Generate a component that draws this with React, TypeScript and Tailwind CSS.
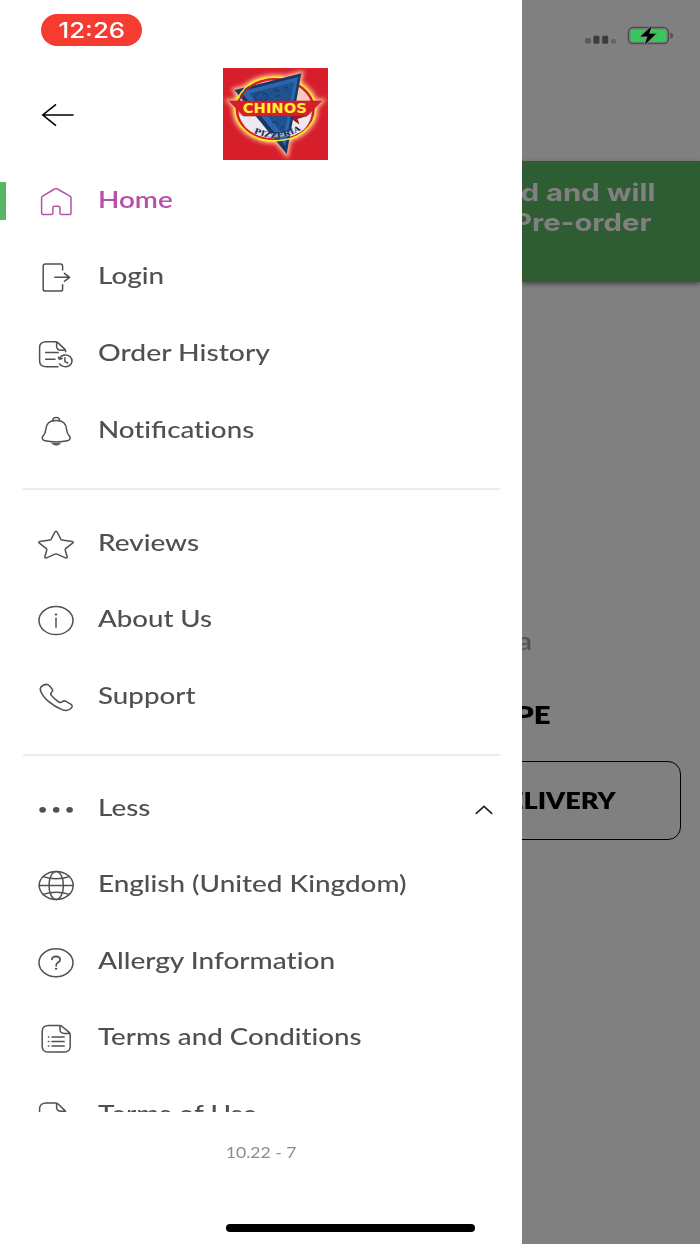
import type { ReactNode } from "react";

function Icon({ children }: { children: ReactNode }) {
  return (
    <svg
      width="36"
      height="36"
      viewBox="0 0 36 36"
      fill="none"
      stroke="currentColor"
      strokeWidth="1.5"
      strokeLinecap="round"
      strokeLinejoin="round"
      className="shrink-0 overflow-visible"
    >
      {children}
    </svg>
  );
}

const HomeIcon = (
  <Icon>
    <path d="M16.6 5 Q18 4 19.4 5 L32 12.2 Q33 12.9 33 14 V29 Q33 30.6 31 30.6 H23.6 Q21.9 30.6 21.9 29 V23.6 Q21.9 22.2 20.2 22.2 H16.6 Q14.9 22.2 14.9 23.6 V29 Q14.9 30.6 13.2 30.6 H5.6 Q3.6 30.6 3.6 29 V14 Q3.6 12.9 4.6 12.2 Z" />
  </Icon>
);
const LoginIcon = (
  <Icon>
    <path d="M24.6 9.9 V5.8 Q24.6 3.9 22.4 3.9 H7.4 Q5.2 3.9 5.2 5.8 V29.2 Q5.2 31.1 7.4 31.1 H22.4 Q24.6 31.1 24.6 29.2 V24.8 M16.8 17.3 H31.4 M26.4 13.3 L31.6 17.3 L26.4 21.3" />
  </Icon>
);
const HistoryIcon = (
  <Icon>
    <path d="M20 29.7 H8.4 Q1.6 29.7 1.6 24 V10.5 Q1.6 4.7 8.4 4.7 H17.6 Q18.8 4.7 19.8 5.6 L27 12.4 Q27.7 13.2 27.7 14.8 M18.6 5 V9.6 Q19 13.2 23 13.2 H27.2 M7.6 15.6 H20.2 M7.6 22.3 H17" />
    <path d="M21.6 21.8 C23.5 17.4 29 17 32 19.6 C35.2 22.6 34.6 27 30.6 29 C27 30.6 23 29.2 21.6 26.8 M20.4 20.2 L21.4 22.2 L24.2 21.6 M26.9 20.8 V24.6 L29.8 26" />
  </Icon>
);
const BellIcon = (
  <Icon>
    <path d="M15 7.2 V5.4 Q15.2 3.4 18.2 3.4 Q21.2 3.4 21.4 5.4 V7.2 M18.2 6.4 C11 6.4 8 10.4 7.8 15.6 C7.7 19 6.6 20.2 5 22 C3.6 23.8 4 26 7 26.8 C13 28.3 23.4 28.3 29.4 26.8 C32.4 26 32.8 23.8 31.4 22 C29.8 20.2 28.7 19 28.6 15.6 C28.4 10.4 25.4 6.4 18.2 6.4 Z" />
    <path d="M13.8 29.2 H22.6 Q21.4 31.2 18.2 31.2 Q15 31.2 13.8 29.2 Z" fill="currentColor" strokeWidth=".6" />
  </Icon>
);
const StarIcon = (
  <Icon>
    <path d="M16.9 5 Q18 3.6 19.1 5 L22.8 12.2 Q23.1 12.9 24 13 L34.2 14.4 Q36 14.9 34.6 16.1 L27.7 21.6 Q27 22.2 27.2 23 L29.2 29.7 Q29.2 31.4 27.4 30.9 L19 27.1 Q18 26.7 17 27.1 L8.6 30.9 Q6.8 31.4 6.8 29.7 L8.8 23 Q9 22.2 8.3 21.6 L1.4 16.1 Q0 14.9 1.8 14.4 L12 13 Q12.9 12.9 13.2 12.2 Z" />
  </Icon>
);
const InfoIcon = (
  <Icon>
    <ellipse cx="18" cy="17.6" rx="17" ry="14" />
    <path d="M18 15.2 V24.2" />
    <ellipse cx="18" cy="11.6" rx="1.4" ry="1" fill="currentColor" stroke="none" />
  </Icon>
);
const PhoneIcon = (
  <Icon>
    <path d="M3.6 6.4 Q8.4 2.6 11.6 6 L14.4 9.4 Q15.2 10.8 13.6 12.2 Q12 13.6 13.2 15.2 Q15.8 19 20.8 22 Q22.6 23 24.2 21.8 Q26 20.2 28 21.4 L32.8 24.2 Q35.6 26.2 32.6 28.8 Q29.4 31.6 24 29.6 C14.4 25.8 5.4 18.4 2.6 11 Q1.6 8.2 3.6 6.4 Z" />
  </Icon>
);
const DotsIcon = (
  <Icon>
    <g fill="currentColor" stroke="none">
      <ellipse cx="4.6" cy="17.8" rx="3.3" ry="2.9" />
      <ellipse cx="18.2" cy="17.8" rx="3.3" ry="2.9" />
      <ellipse cx="31.6" cy="17.8" rx="3.3" ry="2.9" />
    </g>
  </Icon>
);
const GlobeIcon = (
  <Icon>
    <ellipse cx="18.2" cy="17.4" rx="17" ry="14" />
    <ellipse cx="18.2" cy="17.4" rx="7.2" ry="14" />
    <path d="M1.2 17.4 H35.2 M5 8.6 Q18.2 13 31.4 8.6 M5 26.4 Q18.2 22 31.4 26.4" />
  </Icon>
);
const HelpIcon = (
  <Icon>
    <ellipse cx="18" cy="17.8" rx="17" ry="14" />
    <path d="M13.9 14.4 Q14.2 11.4 18 11.4 Q22.2 11.6 22.2 14.6 Q22.2 16.4 20 17.6 Q18 18.8 18.1 20.8" strokeWidth="1.7" />
    <ellipse cx="18.1" cy="23.8" rx="1.3" ry="1" fill="currentColor" stroke="none" />
  </Icon>
);
const TermsIcon = (
  <Icon>
    <path d="M22 4.4 H11 Q4.2 4.4 4.2 10.2 V25.4 Q4.2 31.1 11 31.1 H25.4 Q32.2 31.1 32.2 25.4 V13.4 Q32.2 12.2 31.2 11.4 L23.8 5.2 Q23 4.4 22 4.4 V9 Q22.2 12.4 26.4 12.4 H31.8 M14 15.9 H26.2 M14 20.5 H26.2 M14 25 H26.2 M10.4 15.9 H10.8 M10.4 20.5 H10.8 M10.4 25 H10.8" />
  </Icon>
);
const DocumentIcon = (
  <Icon>
    <path d="M27.7 20 V14.8 Q27.7 13.2 27 12.6 L19.8 5.8 Q18.8 5 17.6 5 H8.4 Q1.6 5 1.6 10.8 V24 Q1.6 29.7 8.4 29.7 H20 M18.6 5.2 V9.6 Q19 13.2 23 13.2 H27.2" />
  </Icon>
);

type Item = { id: string; label: ReactNode; icon: ReactNode; scale: string; active?: boolean; open?: boolean };

const account: Item[] = [
  { id: "home", label: "Home", icon: HomeIcon, scale: "scale-x-[1.21]", active: true },
  { id: "login", label: "Login", icon: LoginIcon, scale: "scale-x-[1.21]" },
  { id: "history", label: "Order History", icon: HistoryIcon, scale: "scale-x-[1.23]" },
  {
    id: "notifications",
    label: (
      <>
        Noti<span className="[font-variant-ligatures:normal]">fi</span>cations
      </>
    ),
    icon: BellIcon,
    scale: "scale-x-[1.205]",
  },
];
const about: Item[] = [
  { id: "reviews", label: "Reviews", icon: StarIcon, scale: "scale-x-[1.214]" },
  { id: "about", label: "About Us", icon: InfoIcon, scale: "scale-x-[1.2]" },
  { id: "support", label: "Support", icon: PhoneIcon, scale: "scale-x-[1.205]" },
];
const more: Item[] = [
  { id: "less", label: "Less", icon: DotsIcon, scale: "scale-x-[1.21]", open: true },
  { id: "language", label: "English (United Kingdom)", icon: GlobeIcon, scale: "scale-x-[1.212]" },
  { id: "allergy", label: "Allergy Information", icon: HelpIcon, scale: "scale-x-[1.218]" },
  { id: "terms", label: "Terms and Conditions", icon: TermsIcon, scale: "scale-x-[1.205]" },
  { id: "use", label: "Terms of Use", icon: DocumentIcon, scale: "scale-x-[1.215]" },
];

function Row({ item }: { item: Item }) {
  return (
    <li
      className={`flex h-[76.6px] shrink-0 items-center ${item.active ? "font-semibold text-[#b650a8]" : "font-medium text-[#505050]"}`}
    >
      <span className={`h-[38px] w-[6px] ${item.active ? "bg-[#55b765]" : ""}`} />
      <span className="mt-[1px] ml-8 flex">{item.icon}</span>
      <span
        className={`-mt-[5px] ml-[23.5px] origin-left whitespace-nowrap text-[23px] leading-7 [font-variant-ligatures:none] ${item.scale}`}
      >
        {item.label}
      </span>
      {item.open && (
        <svg width="18" height="10" viewBox="0 0 18 10" fill="none" stroke="#222" strokeWidth="1.6" className="mt-px mr-[29px] ml-auto">
          <path d="M.8 8.8 L9 1.4 L17.2 8.8" />
        </svg>
      )}
    </li>
  );
}

function Logo() {
  return (
    <svg width="105" height="92" viewBox="0 0 105 92" className="shrink-0">
      <defs>
        <filter id="glow" x="-20%" y="-20%" width="140%" height="140%">
          <feGaussianBlur stdDeviation="2" />
        </filter>
        <path id="arc" d="M30.5 64.5 Q56 77 81 60" />
      </defs>
      <rect width="105" height="92" fill="#d71f2b" />
      <g filter="url(#glow)" fill="#ffd9a8" stroke="#ffc79a" strokeWidth="4">
        <ellipse cx="52.2" cy="41" rx="41" ry="32.5" />
        <path d="M11.5 22 L78.3 5.3 L63.7 86 Z" />
        <path d="M6.3 33 H98.7 L84 48 H20.3 Z" />
      </g>
      <ellipse cx="52.2" cy="41.2" rx="40.4" ry="32" fill="#d71f2b" stroke="#f8e71c" strokeWidth="1.7" />
      <ellipse cx="52.2" cy="41.2" rx="37" ry="29" fill="#f6c9bd" />
      <path d="M16 47 H88.5 Q84 70 52.2 70.2 Q22 69 16 47 Z" fill="#eee9ee" />
      <path d="M11.5 22 L78.3 5.3 L63.7 86 Z" fill="#173765" />
      <path d="M18 23.5 L75.2 9 L62.4 78 Z" fill="#2c66ae" />
      <path d="M26 25.6 L71 14 L61 68 Z" fill="#20528f" />
      <g fill="none" stroke="#173f75" strokeWidth="1.3">
        <ellipse cx="38" cy="29" rx="6.5" ry="4.8" />
        <path d="M35 27 h1 M40 27 h1 M37 31 h1 M51 23 q3 -3 5 1 M52 29 l5 -2 M61 20 q4 -2 4 2 M49 55 q4 -4 6 2 M57 61 l4 -3" />
      </g>
      <path d="M15 31 Q21 14 43 10 M36 71.2 Q54 75.5 74 68.5" fill="none" stroke="#f8e71c" strokeWidth="1.5" />
      <path d="M17.5 31 Q24 17 38 14" fill="none" stroke="#d71f2b" strokeWidth="1.5" />
      <path d="M70 48 L84 48 L74.5 51 L76.5 56.5 L70 52 Z" fill="#9f1420" />
      <path d="M6.3 33 H98.7 L84 48 H20.3 Z" fill="#d71f2b" stroke="#b71822" strokeWidth=".6" />
      <text x="19.8" y="45.2" textLength="64" lengthAdjust="spacingAndGlyphs" fontFamily="'DejaVu Sans', sans-serif" fontWeight="700" fontSize="13.4" fill="#fff22d">
        CHINOS
      </text>
      <path d="M31 59 Q54 73 77 57 L79 62 Q54 77 30 65 Z" fill="#e4e6f0" opacity=".6" />
      <text fontFamily="'DejaVu Serif', serif" fontWeight="700" fontSize="7.6" fill="#152e57">
        <textPath href="#arc" textLength="50" lengthAdjust="spacingAndGlyphs">
          PIZZERIA
        </textPath>
      </text>
    </svg>
  );
}

function Drawer() {
  return (
    <aside className="flex w-[522.4px] shrink-0 flex-col bg-white font-['Lato',sans-serif]">
      <div className="mt-[13.5px] ml-[41px] flex h-[32.5px] w-[101px] items-center justify-center rounded-[16px] bg-[#f63b30]">
        <span className="scale-x-[1.2] font-['Inter',sans-serif] text-[21.5px] leading-8 font-medium text-white">12:26</span>
      </div>
      <header className="mt-[22px] flex h-[92px] shrink-0 items-start">
        <svg width="34" height="24" viewBox="0 0 34 24" fill="none" stroke="#000" strokeWidth="1.6" className="mt-[35px] ml-[41px]">
          <path d="M32.6 12 H1.8 M15 1.4 L1.8 12 L15 22.6" />
        </svg>
        <div className="ml-[147.6px] flex">
          <Logo />
        </div>
      </header>
      <nav className="mt-[3px] h-[949px] shrink-0 overflow-hidden">
        <ul>{account.map((i) => <Row key={i.id} item={i} />)}</ul>
        <hr className="mt-[18.6px] mr-[22px] ml-[23px] border-t-2 border-[#ececec]" />
        <ul className="mt-[16px]">{about.map((i) => <Row key={i.id} item={i} />)}</ul>
        <hr className="mt-[18px] mr-[22px] ml-[23px] border-t-2 border-[#ececec]" />
        <ul className="mt-[15px]">{more.map((i) => <Row key={i.id} item={i} />)}</ul>
      </nav>
      <p className="mt-[28px] text-center text-[16px] leading-6 text-[#8c8c8c]">
        <span className="inline-block scale-x-[1.1]">10.22 - 7</span>
      </p>
      <div className="mt-auto mb-[12.5px] ml-[225.5px] h-[7.5px] w-[249.5px] rounded-full bg-black" />
    </aside>
  );
}

function Backdrop() {
  return (
    <main className="flex w-[177.6px] shrink-0 flex-col overflow-hidden bg-[#808080]">
      <div className="flex h-[66px] shrink-0 items-start justify-end border-b border-[#7d7d7d] pt-[24px] pr-[26px]">
        <svg width="90" height="24" viewBox="0 0 90 24">
          <rect x="1" y="14" width="6" height="5.6" rx="1.6" fill="#5a5a5a" />
          <rect x="9.4" y="11.8" width="6" height="8" rx="1.4" fill="#3c3c3c" />
          <rect x="18.2" y="11.8" width="6" height="8" rx="1.4" fill="#3c3c3c" />
          <rect x="26.8" y="15" width="5.6" height="4.6" rx="1.6" fill="#666" />
          <rect x="44.4" y="3.6" width="40" height="16" rx="4.6" fill="none" stroke="#4e4e4e" strokeWidth="1.5" />
          <rect x="46.6" y="5.8" width="35.6" height="11.8" rx="2.6" fill="#35c95b" />
          <path d="M86.4 8.4 Q89.2 9.4 89.2 11.4 Q89.2 13.6 86.4 14.6 Z" fill="#4e4e4e" />
          <path d="M67.6 2 L56.6 12.6 H63.6 L60.8 20.8 L72 9.8 H65 Z" fill="#000" stroke="#808080" strokeWidth="1.8" paintOrder="stroke" />
        </svg>
      </div>
      <div className="h-[95px] shrink-0" />
      <div className="flex h-[121px] shrink-0 flex-col items-end bg-[#2e5d34] pt-[17px] font-['Inter',sans-serif] text-[24px] leading-[29.5px] font-bold whitespace-nowrap text-[#808080] shadow-[0_2px_5px_rgba(0,0,0,0.45)]">
        <span className="mr-[45px] origin-right scale-x-[1.22]">d and will</span>
        <span className="mr-[49px] origin-right scale-x-[1.22]">Pre-order</span>
      </div>
      <div className="mt-[344px] flex shrink-0 flex-col items-start font-['Lato',sans-serif]">
        <span className="-ml-[5px] origin-left scale-x-[1.218] text-[25px] leading-7 font-medium text-[#525252]">a</span>
      </div>
      <h2 className="mt-[45px] mr-[149px] flex shrink-0 justify-end font-['Lato',sans-serif] text-[24.5px] leading-8 font-extrabold text-black">
        <span className="origin-right scale-x-[1.2]">PE</span>
      </h2>
      <div className="mt-[30px] -ml-[20px] flex h-[79px] w-[179px] shrink-0 items-center justify-end rounded-[13px] border-[1.5px] border-black pr-[65px] font-['Lato',sans-serif] text-[22.5px] font-extrabold text-black">
        <span className="origin-right scale-x-[1.2]">ELIVERY</span>
      </div>
    </main>
  );
}

export default function App() {
  return (
    <div className="flex h-[1244px] w-[700px] overflow-hidden bg-white">
      <Drawer />
      <Backdrop />
    </div>
  );
}
